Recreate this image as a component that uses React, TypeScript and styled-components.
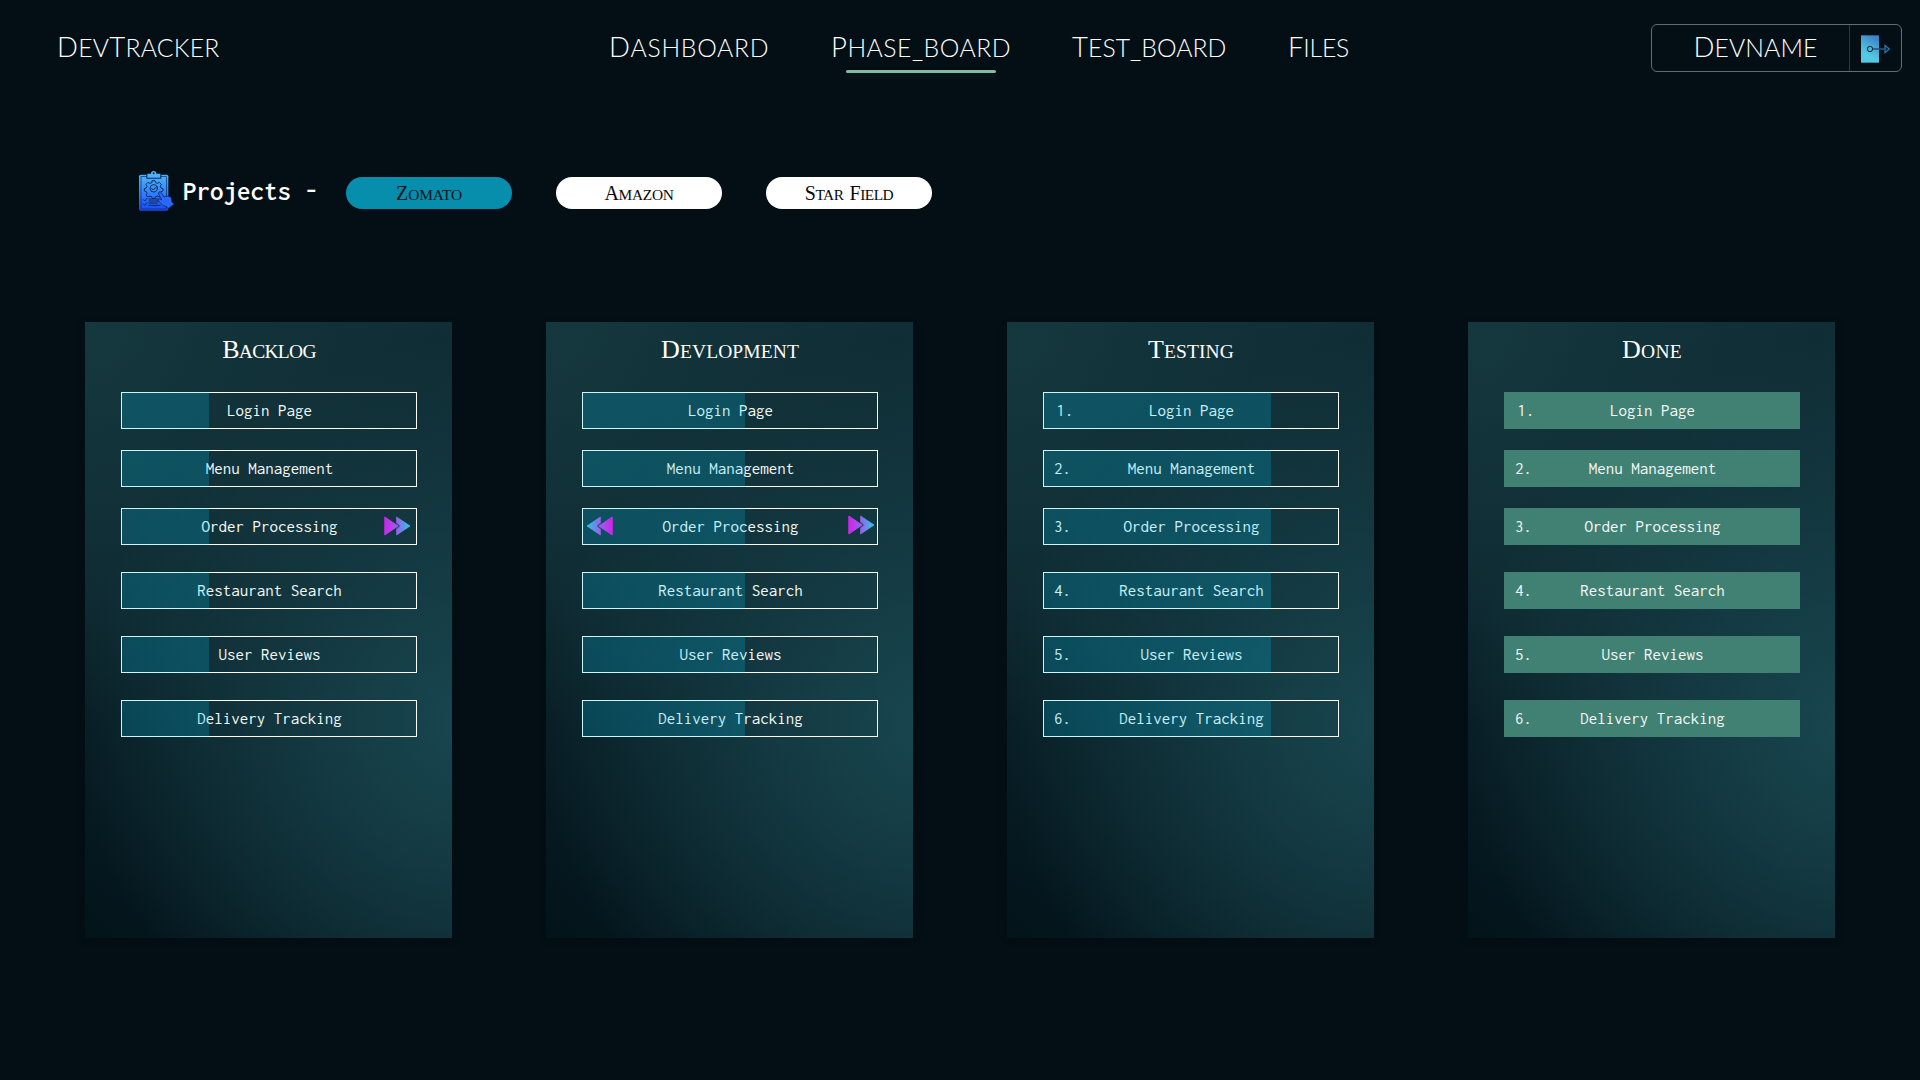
import React from "react";
import styled, { createGlobalStyle } from "styled-components";

const sans = `Lato, "Open Sans", sans-serif`;
const serif = `"Liberation Serif", serif`;
const mono = `Inconsolata, "Noto Sans Mono CJK SC", "Liberation Mono", monospace`;

const GlobalStyle = createGlobalStyle`
  *, *::before, *::after { box-sizing: border-box; }
  body { margin: 0; background: #030f15; color: #fff; }
`;

const Page = styled.div`
  width: 1920px;
  height: 1080px;
  overflow: hidden;
  display: flex;
  flex-direction: column;
`;

const Header = styled.header`
  height: 96px;
  padding: 0 18px 0 57px;
  display: flex;
  align-items: center;
  font-family: ${sans};
  font-weight: 300;
`;

/* A word in small capitals: full-size initial, slightly lower capitals after it. */
const Word = styled.span<{ $size: number; $ratio: number; $track: number }>`
  display: inline-block;
  white-space: nowrap;
  text-transform: uppercase;
  font-size: ${(p) => p.$size * p.$ratio}px;
  letter-spacing: ${(p) => p.$track}px;
  line-height: 1.2;
  &::first-letter { font-size: ${(p) => p.$size}px; }
`;

const Brand = styled.div`
  width: 552px;
  padding-bottom: 4px;
  white-space: nowrap;
`;

const Nav = styled.nav`
  flex: 1;
  display: flex;
  padding-bottom: 4px;
`;

const NavItem = styled.a<{ $width: number; $active?: boolean }>`
  position: relative;
  width: ${(p) => p.$width}px;
  flex: none;
  ${(p) =>
    p.$active &&
    `&::after {
      content: "";
      position: absolute;
      left: 15px;
      top: 40px;
      width: 150px;
      height: 3px;
      border-radius: 2px;
      background: #86ba9c;
      box-shadow: 0 4px 4px rgba(134, 186, 156, 0.08);
    }`}
`;

const UserBox = styled.div`
  width: 251px;
  height: 48px;
  display: flex;
  border: 1px solid #626b6f;
  border-radius: 6px;
`;

const UserName = styled.div`
  width: 198px;
  padding: 0 0 3px 10px;
  display: flex;
  align-items: center;
  justify-content: center;
  border-right: 1px solid #2c363b;
`;

const LogoutButton = styled.div`
  flex: 1;
  display: flex;
  align-items: center;
  padding: 1px 0 0 11px;
`;

const Projects = styled.section`
  height: 50px;
  margin: 69px 0 0 132px;
  display: flex;
  align-items: center;
`;

const ProjectsLabel = styled.h2`
  width: 163px;
  margin: 2px 0 0 3px;
  font: 600 27px/32px ${mono};
  white-space: pre;
`;

const PillRow = styled.div`
  display: flex;
  gap: 44px;
  padding-top: 6px;
`;

const Pill = styled.button<{ $active?: boolean }>`
  width: 166px;
  height: 32px;
  padding: 0;
  display: flex;
  align-items: center;
  justify-content: center;
  gap: 6px;
  border: 0;
  border-radius: 16px;
  background: ${(p) => (p.$active ? "#068eac" : "#fff")};
  color: ${(p) => (p.$active ? "#04161c" : "#0a0a0a")};
  font-family: ${serif};
`;

const Board = styled.main`
  margin: 107px 0 0 85px;
  display: flex;
  gap: 94px;
`;

const Column = styled.section`
  width: 367px;
  height: 616px;
  padding: 12px 35px 0 36px;
  display: flex;
  flex-direction: column;
  background:
    radial-gradient(ellipse 105% 62% at 104% 65%, #18464f 0%, rgba(24, 70, 79, 0) 100%),
    radial-gradient(ellipse 95% 65% at 0% 0%, #15383f 0%, rgba(21, 56, 63, 0) 100%),
    linear-gradient(38deg, #03131a 0%, #0d262e 42%, #102e36 100%);
  box-shadow: 0 2px 8px rgba(0, 0, 0, 0.14);
`;

const ColumnTitle = styled.div`
  height: 58px;
  text-align: center;
  font-family: ${serif};
`;

const Task = styled.div<{ $done?: boolean; $gap: number }>`
  position: relative;
  height: 37px;
  flex: none;
  margin-bottom: ${(p) => p.$gap}px;
  padding: 0 0 2px 1px;
  display: flex;
  align-items: center;
  justify-content: center;
  border: 1px solid ${(p) => (p.$done ? "#418174" : "#fff")};
  background: ${(p) => (p.$done ? "#418174" : "transparent")};
  font: 400 17px/20px ${mono};
  color: #f4f8f8;
`;

const TaskNumber = styled.span<{ $first: boolean }>`
  position: absolute;
  left: ${(p) => (p.$first ? 12.5 : 10)}px;
`;

const Progress = styled.div<{ $width: number }>`
  position: absolute;
  left: -1px;
  top: -1px;
  bottom: -1px;
  width: ${(p) => p.$width}px;
  background: rgba(0, 212, 255, 0.2);
`;

const ArrowSlot = styled.span<{ $left: number; $top: number; $flip?: boolean }>`
  position: absolute;
  left: ${(p) => p.$left}px;
  top: ${(p) => p.$top}px;
  height: 20px;
  transform: ${(p) => (p.$flip ? "scaleX(-1)" : "none")};
`;

function DoubleArrow({ id }: { id: string }) {
  return (
    <svg width="27" height="20" viewBox="0 0 27 20" display="block">
      <defs>
        <linearGradient id={id} gradientUnits="userSpaceOnUse" x1="0" y1="0" x2="27" y2="0">
          <stop offset="0.1" stopColor="#c92bea" />
          <stop offset="0.5" stopColor="#9267ea" />
          <stop offset="1" stopColor="#1fd0e6" />
        </linearGradient>
      </defs>
      <path d="M12.6 1 L26 10 L12.6 19 V12.6 L15.6 10 L12.6 7.4 Z" fill={`url(#${id})`} stroke={`url(#${id})`} strokeWidth="0.8" strokeLinejoin="round" />
      <path d="M0.8 1 L14 10 L0.8 19 Z" fill={`url(#${id})`} stroke={`url(#${id})`} strokeWidth="1" strokeLinejoin="round" />
      <path d="M12.4 7.2 L15.4 10 L12.4 12.8" fill="none" stroke="#2b3566" strokeWidth="0.9" />
    </svg>
  );
}

function ProjectIcon() {
  return (
    <svg width="48" height="50" viewBox="0 0 144 150" fill="none">
      <defs>
        <linearGradient id="clip" x1="0" y1="18" x2="0" y2="138" gradientUnits="userSpaceOnUse">
          <stop offset="0" stopColor="#52bdff" />
          <stop offset="0.5" stopColor="#3388ff" />
          <stop offset="1" stopColor="#1a46f5" />
        </linearGradient>
      </defs>
      <rect x="21" y="29" width="88" height="108" rx="5" fill="url(#clip)" />
      <rect x="27" y="35" width="76" height="97" stroke="#0a2c58" strokeWidth="2" />
      <rect x="43" y="27" width="45" height="14" fill="#07203c" />
      <path d="M46 26 H57 A8 8 0 0 1 73 26 H85 V38 H46 Z" fill="url(#clip)" />
      <circle cx="65" cy="25" r="3" fill="#07203c" />
      <g stroke="#07203c" strokeWidth="2.6" strokeLinejoin="round" strokeLinecap="round">
        <path d="M61 47 h8 l2 6 l5 2 l6-3 l6 6 l-3 6 l2 5 l6 2 v7 l-6 2 l-2 5 l3 6 l-6 5 l-6-3 l-5 2 l-2 5 h-8 l-2-5 l-5-2 l-6 3 l-6-5 l3-6 l-2-5 l-6-2 v-7 l6-2 l2-5 l-3-6 l6-6 l6 3 l5-2 Z" />
        <circle cx="65" cy="70" r="11" />
        <path d="M59 70 l5 5 l11-11" />
        <path d="M34 104 l4 4 l7-8 M34 117 l4 4 l7-8" />
        <path d="M51 102 H78 M51 108 H82 M51 114 H76 M51 121 H84" />
      </g>
      <path d="M81 81 q4-3 7 2 l8 13 q3-3 7-1 q4-4 8 0 q6-2 7 5 l2 12 l7 5 l-19 14 l-5-7 q-11 0-17-9 l-8-9 q0-6 6-4 l5 3 l-9-18 q-2-4 1-6 Z" fill="#2967ff" stroke="#07203c" strokeWidth="2" strokeLinejoin="round" />
    </svg>
  );
}

function LogoutIcon() {
  return (
    <svg width="31" height="28" viewBox="0 0 93 84" fill="none">
      <defs>
        <linearGradient id="door" x1="54" y1="0" x2="20" y2="60" gradientUnits="userSpaceOnUse">
          <stop offset="0" stopColor="#3877c4" />
          <stop offset="1" stopColor="#54c9e2" />
        </linearGradient>
      </defs>
      <rect x="0" y="1" width="54" height="82" fill="url(#door)" />
      <circle cx="27" cy="42" r="8" stroke="#0b2a3c" strokeWidth="3" />
      <path d="M35 42 H54" stroke="#0b2a3c" strokeWidth="3" />
      <path d="M54 42 H71" stroke="#2f7fc4" strokeWidth="3" />
      <path d="M72 31 L85 42 L72 53 Z" stroke="#2e76b8" strokeWidth="3.6" fill="#0a2236" />
    </svg>
  );
}

const TASKS = ["Login Page", "Menu Management", "Order Processing", "Restaurant Search", "User Reviews", "Delivery Tracking"];

type ColumnData = { title: string; track: number; progress: number; numbered?: boolean; done?: boolean; back?: [number, number]; next?: [number, number] };

const COLUMNS: ColumnData[] = [
  { title: "Backlog", track: -0.7, progress: 88, next: [262, 7] },
  { title: "Devlopment", track: 0.1, progress: 163, back: [3, 7], next: [265, 6] },
  { title: "Testing", track: 0.1, progress: 228, numbered: true },
  { title: "Done", track: 0.3, progress: 0, numbered: true, done: true },
];

const NAV = [
  { label: "Dashboard", width: 222, track: 0.7 },
  { label: "Phase_board", width: 241, track: 0.5, active: true },
  { label: "Test_board", width: 216, track: 0.05 },
  { label: "Files", width: 80, track: -0.2 },
];

const PROJECTS = [
  { words: ["Zomato"], track: -0.15, active: true },
  { words: ["Amazon"], track: -0.3 },
  { words: ["Star", "Field"], track: -0.5 },
];

export default function App() {
  return (
    <Page>
      <GlobalStyle />
      <Header>
        <Brand>
          <Word $size={27.5} $ratio={0.9} $track={0.25}>Dev</Word>
          <Word $size={27.5} $ratio={0.9} $track={0.25}>Tracker</Word>
        </Brand>
        <Nav>
          {NAV.map((n) => (
            <NavItem key={n.label} $width={n.width} $active={n.active}>
              <Word $size={27.5} $ratio={0.9} $track={n.track}>{n.label}</Word>
            </NavItem>
          ))}
        </Nav>
        <UserBox>
          <UserName>
            <Word $size={27.5} $ratio={0.9} $track={0.1}>Devname</Word>
          </UserName>
          <LogoutButton>
            <LogoutIcon />
          </LogoutButton>
        </UserBox>
      </Header>
      <Projects>
        <ProjectIcon />
        <ProjectsLabel>Projects -</ProjectsLabel>
        <PillRow>
          {PROJECTS.map((p) => (
            <Pill key={p.words[0]} $active={p.active}>
              {p.words.map((w) => (
                <Word key={w} $size={20} $ratio={0.77} $track={p.track}>{w}</Word>
              ))}
            </Pill>
          ))}
        </PillRow>
      </Projects>
      <Board>
        {COLUMNS.map((c) => (
          <Column key={c.title}>
            <ColumnTitle>
              <Word $size={26} $ratio={0.75} $track={c.track}>{c.title}</Word>
            </ColumnTitle>
            {TASKS.map((t, i) => (
              <Task key={t} $done={c.done} $gap={i < 2 ? 21 : 27}>
                {c.numbered && <TaskNumber $first={i === 0}>{i + 1}.</TaskNumber>}
                {t}
                {c.progress > 0 && <Progress $width={c.progress} />}
                {i === 2 && c.back && (
                  <ArrowSlot $left={c.back[0]} $top={c.back[1]} $flip>
                    <DoubleArrow id={`back-${c.title}`} />
                  </ArrowSlot>
                )}
                {i === 2 && c.next && (
                  <ArrowSlot $left={c.next[0]} $top={c.next[1]}>
                    <DoubleArrow id={`next-${c.title}`} />
                  </ArrowSlot>
                )}
              </Task>
            ))}
          </Column>
        ))}
      </Board>
    </Page>
  );
}
